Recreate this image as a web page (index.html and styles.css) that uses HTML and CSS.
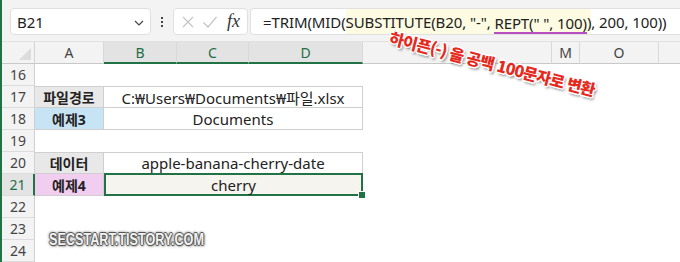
FILE: index.html
```html
<!DOCTYPE html>
<html lang="ko">
<head>
<meta charset="utf-8">
<link rel="stylesheet" href="styles.css">
</head>
<body>
<div class="app">
  <div class="toolbar">
    <div class="namebox">
      <span class="nb-text">B21</span>
      <svg class="chev" width="10" height="6" viewBox="0 0 10 6"><path d="M1 1 L5 5 L9 1" fill="none" stroke="#444" stroke-width="1.2"/></svg>
    </div>
    <div class="dots"><i></i><i></i><i></i></div>
    <div class="fxbox">
      <svg width="14" height="14" viewBox="0 0 14 14"><path d="M2 2 L12 12 M12 2 L2 12" stroke="#c4c4c4" stroke-width="1.2" fill="none"/></svg>
      <svg width="16" height="14" viewBox="0 0 16 14"><path d="M1.5 7.5 L6 12 L14.5 2" stroke="#c4c4c4" stroke-width="1.2" fill="none"/></svg>
      <span class="fx">fx</span>
    </div>
    <div class="formula">
      <span class="ftext">=TRIM(MID(<span class="hl">SUBSTITUTE(B20, "-", <span class="ul">REPT(" ", 100)</span>)</span>, 200, 100))</span>
    </div>
  </div>
  <div class="sheet">
    <div class="corner"><span class="tri"></span></div>
    <div class="ch">A</div>
    <div class="ch sel">B</div>
    <div class="ch sel">C</div>
    <div class="ch sel">D</div>
    <div class="ch blank"></div>
    <div class="ch">M</div>
    <div class="ch">O</div>
    <div class="ch last"></div>

    <div class="rh r16">16</div>
    <div class="rh r17">17</div>
    <div class="rh r18">18</div>
    <div class="rh r19">19</div>
    <div class="rh r20">20</div>
    <div class="rh r21 rsel">21</div>
    <div class="rh r22">22</div>
    <div class="rh r23">23</div>
    <div class="rh r24">24</div>

    <div class="cell lab gray r17 top">파일경로</div>
    <div class="cell val r17 top">C:₩Users₩Documents₩파일.xlsx</div>
    <div class="cell lab blue r18">예제3</div>
    <div class="cell val r18">Documents</div>

    <div class="cell lab gray r20 top">데이터</div>
    <div class="cell val r20 top">apple-banana-cherry-date</div>
    <div class="cell lab pink r21">예제4</div>
    <div class="cell val r21 active">cherry<span class="handle"></span></div>
  </div>
  <div class="note">하이픈(-) 을 공백 100문자로 변환</div>
  <div class="mark">SECSTART.TISTORY.COM</div>
</div>
</body>
</html>
```
FILE: styles.css
```css
* { box-sizing: border-box; }
html, body { margin: 0; padding: 0; background: #fff; }
body { width: 680px; height: 262px; overflow: hidden; font-family: "Noto Sans", "Noto Sans CJK KR", sans-serif; }

.app {
  position: relative;
  width: 680px;
  height: 262px;
  border-left: 2px solid #217346;
  overflow: hidden;
  background: #fff;
}

.toolbar {
  height: 42px;
  background: #f3f3f3;
  display: flex;
  align-items: flex-start;
  padding: 8px 0 0 8px;
  border-bottom: 1px solid #e1e1e1;
}

.namebox {
  width: 141px;
  height: 27px;
  background: #fff;
  border: 1px solid #e0e0e0;
  border-radius: 4px;
  display: flex;
  align-items: center;
  justify-content: space-between;
  padding: 0 6px 0 6px;
  font-size: 15px;
  color: #222;
}
.chev { margin-top: 2px; }

.dots {
  width: 22px;
  height: 27px;
  display: flex;
  flex-direction: column;
  align-items: center;
  justify-content: center;
  gap: 2px;
}
.dots i { display: block; width: 2px; height: 2px; background: #444; }

.fxbox {
  width: 75px;
  height: 27px;
  background: #fff;
  border: 1px solid #e0e0e0;
  border-radius: 4px;
  display: flex;
  align-items: center;
  gap: 7px;
  padding-left: 7px;
}
.fx {
  font-family: "Liberation Serif", serif;
  font-style: italic;
  font-size: 18px;
  color: #333;
  margin-left: 2px;
}

.formula {
  margin-left: 2px;
  flex: 1;
  height: 27px;
  background: #fff;
  border: 1px solid #e0e0e0;
  border-right: none;
  border-radius: 4px 0 0 4px;
  display: flex;
  align-items: stretch;
  padding-left: 12px;
  white-space: nowrap;
  font-size: 15px;
  color: #222;
  letter-spacing: -0.1px;
}
.ftext { display: flex; align-items: center; white-space: pre; }
.hl {
  background: #fdfbe1;
  align-self: stretch;
  display: inline-flex;
  align-items: center;
  white-space: pre;
}
.ul {
  white-space: pre;
  box-shadow: inset 0 -2px 0 #b94fc4;
  padding-bottom: 1px;
  margin-top: 4px;
}

.sheet {
  display: grid;
  grid-template-columns: 33px 69px 73px 72px 114px 189px 28px 79px 1fr;
  grid-template-rows: repeat(10, 22px);
  font-size: 15px;
}

.corner {
  grid-column: 1; grid-row: 1;
  background: #f3f3f3;
  border-right: 1px solid #d4d4d4;
  border-bottom: 1px solid #c8c8c8;
  position: relative;
}
.tri {
  position: absolute;
  right: 3px; bottom: 3px;
  width: 0; height: 0;
  border-left: 12px solid transparent;
  border-bottom: 12px solid #dcdcdc;
}

.ch {
  grid-row: 1;
  background: #f3f3f3;
  border-right: 1px solid #d8d8d8;
  border-bottom: 1px solid #c8c8c8;
  display: flex;
  align-items: center;
  justify-content: center;
  font-size: 14px;
  color: #444;
}
.ch.sel {
  background: #e3e3e3;
  color: #1e6e48;
  border-bottom: 2px solid #217346;
}
.ch.blank { border-right: 1px solid #d8d8d8; }
.ch.last { border-right: none; }

.rh {
  grid-column: 1;
  background: #f3f3f3;
  border-right: 1px solid #d0d0d0;
  border-bottom: 1px solid #dcdcdc;
  display: flex;
  align-items: center;
  justify-content: center;
  font-size: 14px;
  color: #444;
}
.rh.rsel {
  background: #e3e3e3;
  color: #1e6e48;
  border-right: 2px solid #217346;
}

.r16 { grid-row: 2; }
.r17 { grid-row: 3; }
.r18 { grid-row: 4; }
.r19 { grid-row: 5; }
.r20 { grid-row: 6; }
.r21 { grid-row: 7; }
.r22 { grid-row: 8; }
.r23 { grid-row: 9; }
.r24 { grid-row: 10; }

.cell {
  display: flex;
  align-items: center;
  justify-content: center;
  border-right: 1px solid #cfcfcf;
  border-bottom: 1px solid #cfcfcf;
  color: #222;
  white-space: nowrap;
}
.cell.top { border-top: 1px solid #cfcfcf; }
.lab { grid-column: 2; font-weight: 700; font-size: 14px; }
.val { grid-column: 3 / 6; }
.gray { background: #e8e8e8; }
.blue { background: #c7e4f5; }
.pink { background: #f1cdf0; }

.active {
  background: #f5f4ef;
  border: 2px solid #217346;
  position: relative;
  margin-top: -1px;
}
.handle {
  position: absolute;
  right: -4px;
  bottom: -4px;
  width: 6px;
  height: 6px;
  background: #217346;
  outline: 1px solid #fff;
}

.note {
  position: absolute;
  left: 391px;
  top: 25px;
  transform: rotate(14.5deg);
  transform-origin: 0 0;
  font-family: "Noto Sans CJK KR", sans-serif;
  font-weight: 900;
  font-size: 16px;
  letter-spacing: -0.8px;
  color: #e5291d;
  white-space: pre;
  text-shadow:
    1.5px 0 0 #fff, -1.5px 0 0 #fff, 0 1.5px 0 #fff, 0 -1.5px 0 #fff,
    1px 1px 0 #fff, -1px -1px 0 #fff, 1px -1px 0 #fff, -1px 1px 0 #fff,
    2px 2px 3px rgba(0,0,0,0.6);
}

.mark {
  position: absolute;
  left: 47px;
  top: 231px;
  font-family: "Liberation Sans", sans-serif;
  font-weight: 700;
  font-size: 16px;
  white-space: pre;
  transform: scaleX(0.79);
  transform-origin: 0 0;
  color: #f2f2f2;
  text-shadow:
    1px 0 0 #555, -1px 0 0 #555, 0 1px 0 #555, 0 -1px 0 #555,
    1px 1px 3px rgba(0,0,0,0.8), -1px -1px 3px rgba(0,0,0,0.5);
}
```
